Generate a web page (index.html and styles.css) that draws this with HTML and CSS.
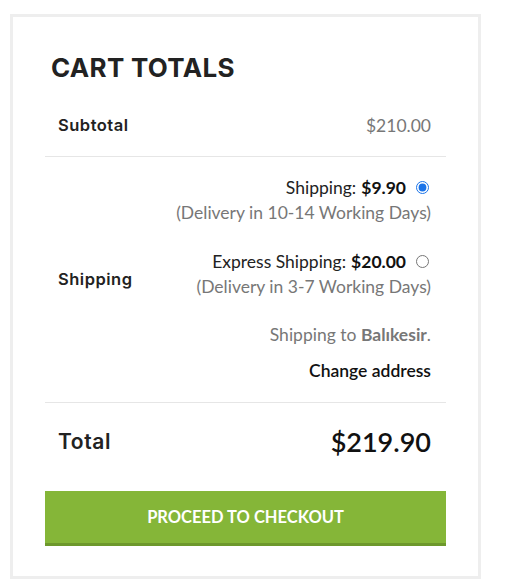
FILE: index.html
```html
<!DOCTYPE html>
<html>
<head>
<meta charset="utf-8">
<link rel="stylesheet" href="styles.css">
</head>
<body>
<div class="card">
  <h2 class="title">CART TOTALS</h2>
  <div class="row subtotal">
    <div class="label">Subtotal</div>
    <div class="value grey">$210.00</div>
  </div>
  <div class="row shipping">
    <div class="label">Shipping</div>
    <div class="value options">
      <div class="option">
        <div class="opt-line">Shipping: <b>$9.90</b><input type="radio" name="ship" checked></div>
        <div class="grey">(Delivery in 10-14 Working Days)</div>
      </div>
      <div class="option">
        <div class="opt-line">Express Shipping: <b>$20.00</b><input type="radio" name="ship"></div>
        <div class="grey">(Delivery in 3-7 Working Days)</div>
      </div>
      <div class="ship-to grey">Shipping to <b>Balıkesir</b>.</div>
      <div class="change">Change address</div>
    </div>
  </div>
  <div class="row total">
    <div class="label">Total</div>
    <div class="value amount">$219.90</div>
  </div>
  <button class="checkout">PROCEED TO CHECKOUT</button>
</div>
</body>
</html>
```

FILE: styles.css
```css
html, body {
  margin: 0;
  padding: 0;
  background: #fff;
}
body {
  font-family: "Lato", "Liberation Sans", sans-serif;
  font-size: 17.5px;
  color: #111;
}
.card {
  margin: 14px 0 0 10px;
  width: 471px;
  height: 565px;
  border: 3px solid #eeeeee;
  padding: 0 32px;
  box-sizing: border-box;
}
.title {
  font-family: "Inter", "DejaVu Sans", sans-serif;
  font-weight: 650;
  font-size: 26px;
  line-height: 32px;
  color: #222;
  margin: 35px 0 0 6px;
  height: 42px;
  letter-spacing: 0.3px;
}
.row {
  display: flex;
  justify-content: space-between;
  align-items: center;
  padding: 0 15px 0 13px;
  border-bottom: 1px solid #e6e6e6;
}
.label {
  font-family: "Inter", "DejaVu Sans", sans-serif;
  font-weight: 600;
  font-size: 16.5px;
  letter-spacing: 0.5px;
  color: #222;
}
.value {
  text-align: right;
  line-height: 25px;
}
.grey {
  color: #777;
}
.subtotal {
  height: 62px;
}
.shipping {
  padding-top: 18px;
  padding-bottom: 19px;
}
.options {
  display: flex;
  flex-direction: column;
  align-items: flex-end;
}
.option {
  display: flex;
  flex-direction: column;
  align-items: flex-end;
}
.option + .option {
  margin-top: 24px;
}
.opt-line {
  display: flex;
  align-items: center;
  justify-content: flex-end;
  color: #222;
}
.opt-line b {
  color: #111;
  margin-left: 5px;
}
.opt-line input {
  margin: 0 2px 0 10px;
  width: 13px;
  height: 13px;
  accent-color: #1a73e8;
}
.ship-to {
  margin-top: 23px;
}
.change {
  margin-top: 11px;
  font-weight: 600;
  color: #111;
}
.total {
  height: 76px;
  border-bottom: none;
}
.total .label {
  font-size: 21px;
  letter-spacing: 0.6px;
}
.amount {
  font-size: 27px;
  font-weight: 600;
  color: #111;
}
.checkout {
  display: block;
  width: 100%;
  height: 55px;
  margin-top: 12px;
  border: none;
  border-bottom: 3px solid #6d982c;
  background: #85b638;
  color: #fff;
  font-family: "Lato", "Liberation Sans", sans-serif;
  font-weight: 700;
  font-size: 16.5px;
  padding: 0;
}
```
